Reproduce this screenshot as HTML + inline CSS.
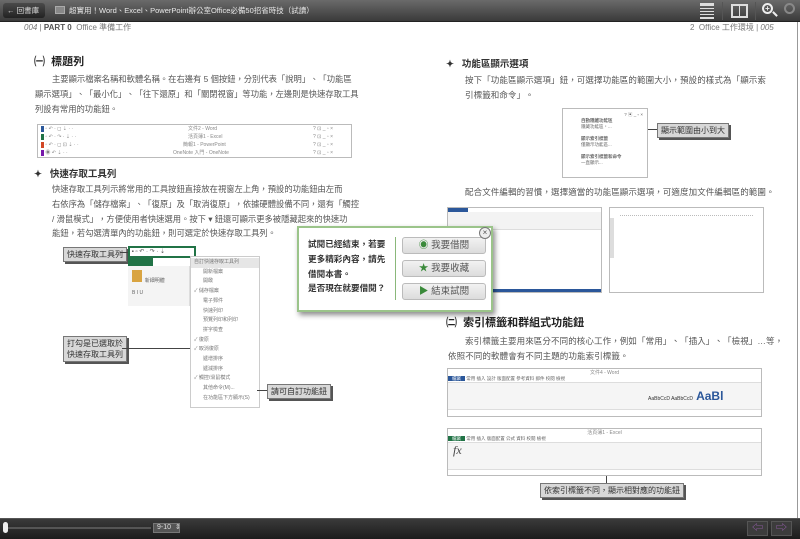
<!DOCTYPE html>
<html><head><meta charset="utf-8"><style>
*{margin:0;padding:0;box-sizing:border-box}
body{width:800px;height:539px;overflow:hidden;background:#fff;font-family:"Liberation Sans","Noto Sans CJK TC",sans-serif;color:#444;position:relative}
.a{position:absolute;white-space:nowrap}
.p{font-size:8.5px;color:#555;letter-spacing:0.1px}
.pl{font-size:8.3px;letter-spacing:0}
.h{font-size:11px;font-weight:bold;color:#222}
.h2{font-size:9.5px;font-weight:bold;color:#333}
.lbl{position:absolute;background:#d8d8d8;border:1px solid #777;box-shadow:2px 2px 0 #555;font-size:8px;color:#333;padding:1px 3px;white-space:nowrap;line-height:11px}
.shot{position:absolute;border:1px solid #bbb;background:#fafafa}
.ln{position:absolute;background:#444}
.z{z-index:10}
.btn{position:absolute;left:402px;width:84px;height:17px;background:linear-gradient(#f2f2f2,#dcdcdc);border:1px solid #bbb;border-radius:3px;font-size:9.5px;color:#555;text-align:center;line-height:15px;z-index:11}
</style></head><body>
<div class="a" style="left:0;top:0;width:800px;height:22px;background:linear-gradient(#6a6a6a,#3a3a3a);border-bottom:1px solid #222"></div>
<div class="a" style="left:3px;top:3px;width:42px;height:15px;background:linear-gradient(#4a4a4a,#222);border-radius:3px;color:#ddd;font-size:7.5px;line-height:15px;padding-left:4px">&#x2190; 回書庫</div>
<div class="a" style="left:55px;top:6px;width:10px;height:8px;border:1px solid #aaa;background:#888"></div>
<div class="a" style="left:69px;top:5px;font-size:7.5px;color:#e8e8e8">超實用！Word、Excel、PowerPoint辦公室Office必備50招省時技（試讀）</div>
<div class="a" style="left:700px;top:3px;width:14px;height:16px;border-top:2px solid #ddd;border-bottom:2px solid #ddd;background:repeating-linear-gradient(#ddd 0 1px,transparent 1px 3px)"></div>
<div class="a" style="left:731px;top:4px;width:17px;height:14px;border:2px solid #ddd"><div style="position:absolute;left:6px;top:0;width:1px;height:10px;background:#ddd"></div></div>
<div class="a" style="left:722px;top:2px;width:1px;height:18px;background:#555"></div>
<div class="a" style="left:755px;top:2px;width:1px;height:18px;background:#555"></div>
<div class="a" style="left:762px;top:3px;width:11px;height:11px;border:2px solid #eee;border-radius:50%;font-size:8px;color:#eee;line-height:7px;text-align:center;font-weight:bold">+</div>
<div class="a" style="left:772px;top:13px;width:6px;height:2px;background:#eee;transform:rotate(45deg)"></div>
<div class="a" style="left:784px;top:3px;width:11px;height:11px;border:2px solid #888;border-radius:50%"></div>
<div class="a" style="left:24px;top:22px;font-size:8px;color:#777"><i>004</i> | <b style="color:#555">PART 0</b> &nbsp;Office 準備工作</div>
<div class="a" style="left:690px;top:22px;font-size:8px;color:#777">2 &nbsp;Office 工作環境 | <i>005</i></div>
<div class="a" style="left:797px;top:22px;width:1px;height:496px;background:#999"></div>
<div class="a h" style="left:34px;top:53px">㈠ &nbsp;標題列</div>
<div class="a p pl" style="left:52px;top:73px">主要顯示檔案名稱和軟體名稱。在右邊有 5 個按鈕，分別代表「說明」、「功能區</div>
<div class="a p pl" style="left:35px;top:88px">顯示選項」、「最小化」、「往下還原」和「關閉視窗」等功能，左邊則是快速存取工具</div>
<div class="a p pl" style="left:35px;top:103px">列設有常用的功能鈕。</div>
<div class="shot" style="left:37px;top:124px;width:315px;height:34px;background:#fff">
<div style="font-size:5px;color:#888;line-height:8px;padding-left:3px">
<div><span style="background:#2b579a;color:#2b579a">■</span> ▫ ↶ · ◻ ⇣ · ·<span style="position:absolute;left:150px">文件2 - Word</span><span style="position:absolute;left:275px">? ⊡ _ ▫ ×</span></div>
<div><span style="background:#217346;color:#217346">■</span> ▫ ↶ · ↷ · ⇣ · ·<span style="position:absolute;left:150px">活頁簿1 - Excel</span><span style="position:absolute;left:275px">? ⊡ _ ▫ ×</span></div>
<div><span style="background:#d24726;color:#d24726">■</span> ▫ ↶ · ◻ ⊡ ⇣ · ·<span style="position:absolute;left:145px">簡報1 - PowerPoint</span><span style="position:absolute;left:275px">? ⊡ _ ▫ ×</span></div>
<div><span style="background:#7719aa;color:#7719aa">■</span> ◉ ↶ ⇣ · ·<span style="position:absolute;left:135px">OneNote 入門 - OneNote</span><span style="position:absolute;left:275px">? ⊡ _ ▫ ×</span></div></div></div>
<div class="a h2" style="left:34px;top:166px">✦ &nbsp;&nbsp;快速存取工具列</div>
<div class="a p pl" style="left:52px;top:183px">快速存取工具列示將常用的工具按鈕直接放在視窗左上角，預設的功能鈕由左而</div>
<div class="a p pl" style="left:52px;top:198px">右依序為「儲存檔案」、「復原」及「取消復原」，依據硬體設備不同，還有「觸控</div>
<div class="a p pl" style="left:52px;top:213px">/ 滑鼠模式」，方便使用者快速選用。按下 ▾ 鈕還可顯示更多被隱藏起來的快速功</div>
<div class="a p pl" style="left:52px;top:227px">能鈕，若勾選清單內的功能鈕，則可選定於快速存取工具列。</div>
<div class="lbl" style="left:63px;top:247px">快速存取工具列</div>
<div class="ln" style="left:120px;top:252px;width:8px;height:1px"></div>
<div class="a" style="left:128px;top:246px;width:68px;height:12px;border:2px solid #217346;background:#fff;font-size:6px;color:#555;line-height:8px">&nbsp;▪ ▫ ↶ · ↷ · ⇣</div>
<div class="a" style="left:128px;top:258px;width:25px;height:8px;background:#217346"></div>
<div class="a" style="left:128px;top:266px;width:62px;height:40px;background:#f4f4f4;border-right:1px solid #ddd;font-size:5px;color:#666;padding:4px"><span style="display:inline-block;width:10px;height:12px;background:#d9a441"></span> &nbsp;新細明體<br><br>B I U</div>
<div class="a" style="left:190px;top:256px;width:70px;height:152px;background:#fff;border:1px solid #ccc;font-size:5px;color:#777;line-height:9.7px;padding:1px 0 0 0">
<div style="background:#e6e6e6;padding-left:3px">自訂快速存取工具列</div>
<div style="padding-left:12px">開新檔案<br>開啟<br><span style="margin-left:-9px">✓ </span>儲存檔案<br>電子郵件<br>快速列印<br>預覽列印和列印<br>拼字檢查<br><span style="margin-left:-9px">✓ </span>復原<br><span style="margin-left:-9px">✓ </span>取消復原<br>遞增排序<br>遞減排序<br><span style="margin-left:-9px">✓ </span>觸控/滑鼠模式<br>其他命令(M)...<br>在功能區下方顯示(S)</div></div>
<div class="lbl" style="left:63px;top:336px">打勾是已選取於<br>快速存取工具列</div>
<div class="ln" style="left:122px;top:348px;width:68px;height:1px"></div>
<div class="lbl" style="left:267px;top:384px">請可自訂功能鈕</div>
<div class="ln" style="left:257px;top:390px;width:10px;height:1px"></div>
<div class="a h2" style="left:446px;top:56px">✦ &nbsp;&nbsp;功能區顯示選項</div>
<div class="a p" style="left:465px;top:74px">按下「功能區顯示選項」鈕，可選擇功能區的範圍大小，預設的樣式為「顯示索</div>
<div class="a p" style="left:465px;top:89px">引標籤和命令」。</div>
<div class="shot" style="left:562px;top:108px;width:86px;height:70px;background:#fff;font-size:4.5px;color:#666;line-height:6px;padding:3px 4px 0 18px"><div style="text-align:right">? ▣ _ ▫ ×</div><b>自動隱藏功能區</b><br>隱藏功能區，...<br><br><b>顯示索引標籤</b><br>僅顯示功能區...<br><br><b>顯示索引標籤和命令</b><br>一直顯示...</div>
<div class="lbl" style="left:657px;top:123px">顯示範圍由小到大</div>
<div class="ln" style="left:648px;top:129px;width:9px;height:1px"></div>
<div class="a p" style="left:465px;top:186px">配合文件編輯的習慣，選擇適當的功能區顯示選項，可適度加文件編輯區的範圍。</div>
<div class="shot" style="left:447px;top:207px;width:155px;height:86px;background:#fff"><div style="height:4px;background:#2b579a;width:20px"></div><div style="height:18px;background:#f3f3f3;border-bottom:1px solid #ddd"></div><div style="position:absolute;bottom:0;left:0;right:0;height:3px;background:#2b579a"></div></div>
<div class="shot" style="left:609px;top:207px;width:155px;height:86px;background:#fff"><div style="height:4px;border-bottom:1px dotted #bbb;margin:4px 10px"></div><div style="position:absolute;left:0;top:10px;width:4px;height:40px;background:#ddd"></div></div>
<div class="a h" style="left:446px;top:314px">㈡ &nbsp;索引標籤和群組式功能鈕</div>
<div class="a p" style="left:465px;top:335px">索引標籤主要用來區分不同的核心工作，例如「常用」、「插入」、「檢視」…等，</div>
<div class="a p" style="left:448px;top:350px">依照不同的軟體會有不同主題的功能索引標籤。</div>
<div class="shot" style="left:447px;top:368px;width:315px;height:49px;background:#fff"><div style="height:7px;font-size:5px;color:#888;text-align:center">文件4 - Word</div><div style="height:6px;background:#fff;font-size:4.5px;color:#666"><span style="background:#2b579a;color:#fff;padding:0 4px">檔案</span> 常用 插入 設計 版面配置 參考資料 郵件 校閱 檢視</div><div style="height:28px;background:#f5f5f5;border-top:1px solid #ddd;border-bottom:1px solid #ddd;font-size:11px;color:#333;padding-left:200px;line-height:26px"><span style="font-size:5px">AaBbCcD AaBbCcD</span> <b style="font-size:12px;color:#2b579a">AaBl</b></div></div>
<div class="shot" style="left:447px;top:428px;width:315px;height:48px;background:#fff"><div style="height:7px;font-size:5px;color:#888;text-align:center">活頁簿1 - Excel</div><div style="height:6px;font-size:4.5px;color:#666"><span style="background:#217346;color:#fff;padding:0 4px">檔案</span> 常用 插入 版面配置 公式 資料 校閱 檢視</div><div style="height:28px;background:#f5f5f5;border-top:1px solid #ddd;border-bottom:1px solid #ddd;font-size:12px;font-family:'Liberation Serif';padding-left:5px;font-style:italic">fx</div></div>
<div class="ln" style="left:606px;top:476px;width:1px;height:8px"></div>
<div class="lbl" style="left:540px;top:483px">依索引標籤不同，顯示相對應的功能鈕</div>
<div class="a z" style="left:297px;top:226px;width:196px;height:86px;background:#fff;border:2px solid #9bc48a;box-shadow:2px 3px 5px rgba(0,0,0,.45)"></div>
<div class="a z" style="left:479px;top:227px;width:12px;height:12px;border:1px solid #777;border-radius:50%;background:#eee;font-size:8px;line-height:10px;text-align:center;color:#555;z-index:12">×</div>
<div class="a z" style="left:308px;top:237px;font-size:8.6px;color:#333;line-height:14.8px;font-weight:bold">試閱已經結束，若要<br>更多精彩內容，請先<br>借閱本書。<br>是否現在就要借閱？</div>
<div class="a z" style="left:395px;top:237px;width:1px;height:63px;background:#8ab87a"></div>
<div class="btn" style="top:237px"><span style="color:#3a8a3a">◉</span> 我要借閱</div>
<div class="btn" style="top:260px"><span style="color:#3a8a3a">★</span> 我要收藏</div>
<div class="btn" style="top:283px"><span style="color:#3a8a3a">▶</span> 結束試閱</div>
<div class="a" style="left:0;top:518px;width:800px;height:21px;background:linear-gradient(#3a3a3a,#1c1c1c);border-top:1px solid #555"></div>
<div class="a" style="left:5px;top:527px;width:146px;height:2px;background:#555"></div>
<div class="a" style="left:3px;top:522px;width:5px;height:11px;background:#eee;border-radius:3px"></div>
<div class="a" style="left:153px;top:523px;width:27px;height:10px;background:#555;border:1px solid #777;font-size:7px;color:#ddd;line-height:8px;padding-left:3px">9-10 &nbsp;⇕</div>
<div class="a" style="left:747px;top:521px;width:21px;height:15px;background:#3c3c3c;border:1px solid #555;color:#9a5fb0;font-size:11px;text-align:center;line-height:13px">⇦</div>
<div class="a" style="left:771px;top:521px;width:21px;height:15px;background:#3c3c3c;border:1px solid #555;color:#9a5fb0;font-size:11px;text-align:center;line-height:13px">⇨</div>
</body></html>
